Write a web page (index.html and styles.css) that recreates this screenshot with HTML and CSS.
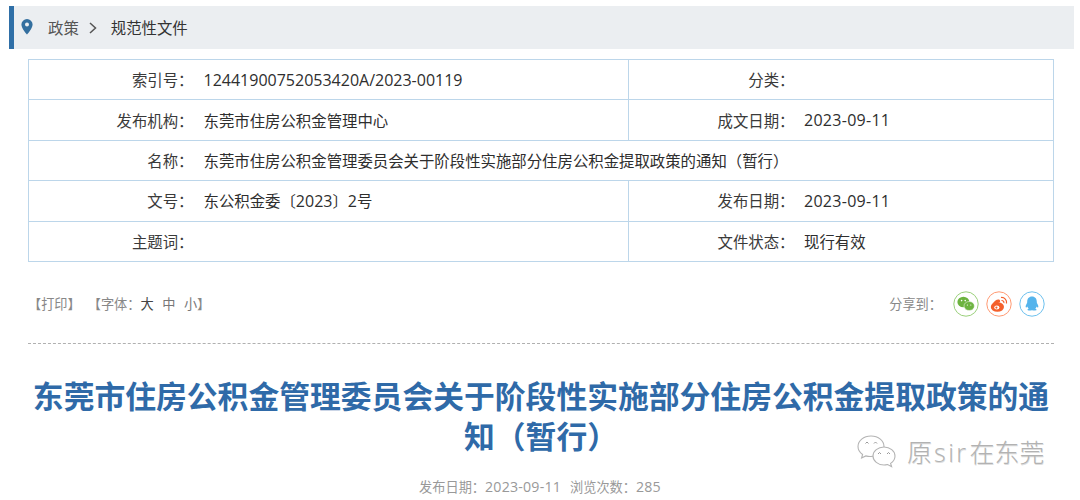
FILE: index.html
```html
<!DOCTYPE html>
<html lang="zh-CN">
<head>
<meta charset="utf-8">
<title>规范性文件</title>
<link rel="stylesheet" href="styles.css">
</head>
<body>
<div class="crumb">
  <svg class="pin" width="12" height="16" viewBox="0 0 12 16"><path fill="#336f9f" fill-rule="evenodd" d="M6 0a5.600 5.600 0 0 0-5.600 5.600C.4 9.600 6 15.600 6 15.600s5.600-6 5.600-10A5.600 5.600 0 0 0 6 0zm0 3.600a2 2 0 1 1 0 4 2 2 0 0 1 0-4z"/></svg>
  <span class="crumb-link">政策</span>
  <svg class="chev" width="8" height="12" viewBox="0 0 8 12"><path fill="none" stroke="#555" stroke-width="1.500" d="M1 1l5.500 5L1 11"/></svg>
  <span class="crumb-cur">规范性文件</span>
</div>
<table class="meta">
  <colgroup><col class="c1"><col class="c2"><col class="c3"><col></colgroup>
  <tr><th>索引号：</th><td><span class="code">12441900752053420A/2023-00119</span></td><th>分类：</th><td></td></tr>
  <tr><th>发布机构：</th><td>东莞市住房公积金管理中心</td><th>成文日期：</th><td><span class="num">2023-09-11</span></td></tr>
  <tr><th>名称：</th><td colspan="3">东莞市住房公积金管理委员会关于阶段性实施部分住房公积金提取政策的通知（暂行）</td></tr>
  <tr><th>文号：</th><td>东公积金委〔<span class="code">2023</span>〕<span class="code">2</span>号</td><th>发布日期：</th><td><span class="num">2023-09-11</span></td></tr>
  <tr><th>主题词：</th><td></td><th>文件状态：</th><td>现行有效</td></tr>
</table>
<div class="tools">
  <div class="tools-left">
    <span>【打印】</span>
    <span class="font-size">【字体：<b class="big">大</b><b>中</b><b>小</b>】</span>
  </div>
  <div class="share">
    <span class="share-label">分享到：</span>
    <svg class="ico" width="26" height="26" viewBox="0 0 26 26"><circle cx="13" cy="13" r="12.200" fill="#fff" stroke="#9ad07a"/><ellipse cx="10.400" cy="11" rx="6" ry="5.200" fill="#6cb33f"/><ellipse cx="16.200" cy="15" rx="5.200" ry="4.500" fill="#6cb33f" stroke="#fff" stroke-width=".5"/><circle cx="8.600" cy="9.600" r=".8" fill="#fff"/><circle cx="12.200" cy="9.600" r=".8" fill="#fff"/><circle cx="14.400" cy="14" r=".6" fill="#fff"/><circle cx="17.800" cy="14" r=".6" fill="#fff"/></svg>
    <svg class="ico" width="26" height="26" viewBox="0 0 26 26"><circle cx="13" cy="13" r="12.200" fill="#fff" stroke="#ff9a73"/><ellipse cx="11.400" cy="16" rx="6.600" ry="4.800" fill="#f4602c"/><path d="M6 13.500c2-3.500 5-5.500 7-5 1.500.5 1 2.500 1 2.500l-6 3z" fill="#f4602c"/><ellipse cx="10.800" cy="16.400" rx="2.600" ry="2" fill="#fff"/><circle cx="10.400" cy="16.600" r="1.100" fill="#f4602c"/><path d="M15 6.500a5 5 0 0 1 5.500 6" fill="none" stroke="#f4602c" stroke-width="1.200"/><path d="M15.500 9.500a2.200 2.200 0 0 1 2.400 2.600" fill="none" stroke="#f4602c" stroke-width="1.100"/></svg>
    <svg class="ico" width="26" height="26" viewBox="0 0 26 26"><circle cx="13" cy="13" r="12.200" fill="#fff" stroke="#6cc0ee"/><path d="M13 5.500c-3.200 0-4.800 2.500-4.800 5.200 0 1-.2 1.500-.8 2.500-.8 1.300-1 2.800-.4 3.200.4.2 1-.3 1.400-1 .2 1 .7 1.800 1.300 2.300-.8.3-1.400.8-1.300 1.300.2.6 2.500.6 4.600.2 2.100.4 4.400.4 4.600-.2.100-.5-.5-1-1.300-1.300.6-.5 1.100-1.300 1.300-2.300.4.7 1 1.200 1.400 1 .6-.4.400-1.900-.4-3.200-.6-1-.8-1.500-.8-2.500 0-2.700-1.600-5.200-4.800-5.200z" fill="#55b4ec"/></svg>
  </div>
</div>
<div class="rule"></div>
<h1 class="title">东莞市住房公积金管理委员会关于阶段性实施部分住房公积金提取政策的通知（暂行）</h1>
<p class="info">发布日期：<span class="info-num">2023-09-11</span><span class="info-gap">浏览次数：</span><span class="info-num">285</span></p>
<div class="mark">
  <svg width="44" height="38" viewBox="0 0 44 38"><g fill="#fff" stroke="#b4b4b4" stroke-width="1.100"><path d="M16 3C8.500 3 3 7.800 3 13.500c0 3.300 1.800 6 4.600 8l-1 3.500 4.200-2.100c1.500.4 3.400.7 5.200.6C23 23.500 29 19 29 13.500 29 7.800 23.500 3 16 3z"/><path d="M29 14c-6 0-11 4-11 9s5 9 11 9c1.300 0 2.500-.2 3.600-.5l4 2.200-1-3.300c2.700-1.700 4.400-4.300 4.400-7.400 0-5-5-9-11-9z"/></g><g fill="none" stroke="#999" stroke-width="1"><path d="M10.500 10.500l1.500-1.500 1.500 1.500M19 10.500l1.500-1.500 1.500 1.500M23 21l1.500-1.500L26 21M32 21l1.500-1.500L35 21"/></g></svg>
  <span class="mark-text">原<span class="mark-latin">sir</span>在东莞</span>
</div>
</body>
</html>
```

FILE: styles.css
```css
* { box-sizing: border-box; }
body {
  margin: 0;
  height: 500px;
  overflow: hidden;
  position: relative;
  background: #fff;
  color: #333;
  font-family: "Open Sans", "Noto Sans CJK SC", sans-serif;
  font-size: 15.4px;
}
.crumb {
  display: flex;
  align-items: center;
  height: 43px;
  margin: 6px 6px 0 9px;
  padding: 0 0 0 7px;
  background: #ebeef1;
  border-left: 5px solid #2f6fa7;
}
.pin { margin: -2px 15px 0 0; }
.crumb-link { color: #555; }
.chev { margin: 0 14px 0 10px; }
.meta {
  width: 1026px;
  height: 202px;
  margin: 10px 0 0 28px;
  border: 1px solid #bcd6ea;
  border-collapse: collapse;
  table-layout: fixed;
}
.c1 { width: 165px; }
.c2 { width: 435px; }
.c3 { width: 166px; }
.meta tr { height: 40.400px; }
.meta th, .meta td {
  padding: 0;
  font-weight: normal;
  border-top: 1px solid #bcd6ea;
  border-bottom: 1px solid #bcd6ea;
}
.meta th { text-align: right; color: #3a3a3a; }
.meta td { padding-left: 10px; color: #2e2e2e; }
.meta td:last-child { padding-left: 9.500px; }
.meta td[colspan] { padding-left: 10px; }
.meta td:nth-child(2):not([colspan]) { border-right: 1px solid #bcd6ea; }
.num { font-size: 16px; letter-spacing: .28px; }
.code { font-size: 16px; }
.tools {
  display: flex;
  justify-content: space-between;
  align-items: center;
  height: 26px;
  margin: 29px 35px 0 28px;
  font-size: 13.2px;
  color: #888;
}
.tools-left { display: flex; gap: 7px; }
.font-size b { font-weight: normal; margin-right: 8.500px; color: #777; }
.font-size b.big { color: #444; }
.font-size b:last-of-type { margin-right: 0; }
.share { display: flex; align-items: center; gap: 7px; }
.share-label { margin-right: 4px; }
.ico { display: block; }
.rule {
  margin: 26px 26px 0 28px;
  border-top: 1px dashed #b0b0b0;
}
.title {
  margin: 33px 26px 0 28px;
  font-size: 30.800px;
  line-height: 39.600px;
  font-weight: bold;
  text-align: center;
  color: #2f6aa8;
}
.info {
  margin: 21px 0 0;
  text-align: center;
  font-size: 13.2px;
  color: #999;
}
.info-num { font-size: 14.200px; letter-spacing: .2px; }
.info-gap { margin-left: 9px; }
.mark {
  position: absolute;
  left: 855px;
  top: 433px;
  display: flex;
  align-items: center;
  gap: 8px;
  color: #b2b2b2;
}
.mark svg { display: block; }
.mark-text { font-size: 25px; line-height: 38px; font-weight: 300; text-shadow: .5px .5px 0 #ddd; }
.mark-latin { letter-spacing: 2.500px; margin: 0 1px 0 2px; }
```
